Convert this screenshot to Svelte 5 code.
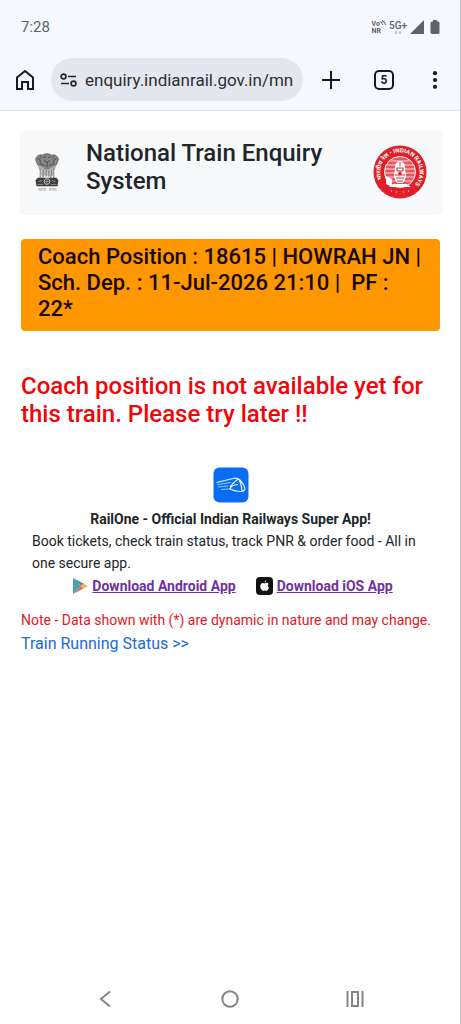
<script lang="ts">
	let address = 'enquiry.indianrail.gov.in/mn';

	const coach = {
		train: '18615',
		station: 'HOWRAH JN',
		departure: '11-Jul-2026 21:10',
		platform: '22*'
	};
</script>

<div class="screen">
	<div class="browser">
		<div class="status-bar">
			<span class="time">7:28</span>
			<div class="signals">
				<span class="volte">
					<span>Vo<svg width="6" height="6" viewBox="0 0 6 6" fill="none" stroke="#606266" aria-hidden="true"><path d="M.5 1.500 3 5M2 .5Q5 1 5.500 5M1 3q1-2 3-1" /></svg></span>
					<span>NR</span>
				</span>
				<span class="network">
					5G+
					<svg width="8" height="3" viewBox="0 0 8 3" fill="#c2c4c9" aria-hidden="true"><path d="M1 0h2v3H1zM5 0h2v3H5z" /></svg>
				</span>
				<svg width="14" height="14" viewBox="0 0 14 14" aria-hidden="true"><path d="M14 0v14H0z" fill="#606266" /></svg>
				<svg class="battery" width="10" height="14" viewBox="0 0 10 14" aria-hidden="true">
					<path d="M3 0h4v1.500h1.500Q9.500 1.500 9.500 3v9.500Q9.500 14 8 14H2Q.5 14 .5 12.500V3Q.5 1.500 2 1.500h1z" fill="#606266" />
				</svg>
			</div>
		</div>
		<div class="toolbar">
			<button class="tool" aria-label="Home">
				<svg width="20" height="22" viewBox="0 0 20 22" fill="none" stroke="#1a1b20" stroke-width="2">
					<path d="M2 8.500 10 2l8 6.500V20h-5v-7H7v7H2z" />
				</svg>
			</button>
			<label class="address">
				<svg width="17" height="14" viewBox="0 0 17 14" fill="none" stroke="#24262c" stroke-width="1.700" aria-hidden="true">
					<circle cx="3.500" cy="3.500" r="2.400" />
					<path d="M8 3.500h8M1 10.500h8" />
					<circle cx="13.500" cy="10.500" r="2.400" />
				</svg>
				<input type="text" aria-label="Address" bind:value={address} />
			</label>
			<button class="tool new-tab" aria-label="New tab">
				<svg width="18" height="18" viewBox="0 0 18 18" stroke="#1a1b20" stroke-width="2"><path d="M9 0v18M0 9h18" /></svg>
			</button>
			<button class="tool" aria-label="Switch tabs"><span class="tab-count">5</span></button>
			<button class="tool more" aria-label="More options">
				<svg width="6" height="18" viewBox="0 0 6 18" fill="#1a1b20">
					<circle cx="3" cy="2.200" r="2.100" /><circle cx="3" cy="9" r="2.100" /><circle cx="3" cy="15.800" r="2.100" />
				</svg>
			</button>
		</div>
	</div>

	<main>
		<header>
			<svg class="emblem" width="26" height="40" viewBox="0 0 26 42" role="img" aria-label="Emblem of India">
				<path d="M7 3Q13-1 19 3q5 0 6 5l-2 5-2 6H5l-2-6-2-5q1-5 6-5z" fill="#aaa" />
				<path d="M7 5q6-6 12 0l1 6-3 6-4 2-4-2-3-6zM1 8q1-5 6-5L5 8l2 6-4-1zM25 8q-1-5-6-5l2 5-2 6 4-1z" fill="#888" stroke="#555" stroke-width=".8" />
				<path d="M9 6q2-2 3 0m2 0q2-2 3 0M10 9l3 2 3-2M8 12l3 3m7-3-3 3m-2-4v5M3 7l2 1m18-1-2 1" fill="none" stroke="#444" stroke-width="1" />
				<path d="M6 17v11m3-12v11m8-11v11m3-10v11" stroke="#999" stroke-width="1.500" />
				<path d="M8 16q5 5 10 0l2 9H6z" fill="#bbb" />
				<path d="M9 18v7m3-6v7m3-7v7m3-8v7" stroke="#777" />
				<path d="M3 27h20l2 3-1 6H2l-1-6z" fill="#3c3c3c" />
				<circle cx="13" cy="31" r="3" fill="#333" stroke="#ccc" />
				<path d="M13 28v6m-3-3h6M4 31l4-1m10 0 4 1M3 34h6m8 0h6" stroke="#999" />
				<path d="M4 40h4m1 0h3m3 0h3m1 0h4M4 38.500h8m3 0h8" stroke="#999" stroke-width=".8" />
			</svg>
			<h1>National Train Enquiry System</h1>
			<svg class="railways" width="54" height="54" viewBox="0 0 54 54" role="img" aria-label="Indian Railways">
				<defs>
					<path id="ring" d="M14.500 41.900A19.500 19.500 0 1 1 39.500 41.900" />
				</defs>
				<circle cx="27" cy="27" r="26.500" fill="#df2029" />
				<text class="ring-text"><textPath href="#ring" startOffset="9">भारतीय रेल • INDIAN RAILWAYS</textPath></text>
				<circle cx="27" cy="27" r="15.500" fill="#e8545a" stroke="#fff" />
				<path d="M14 20h26M12 24h30M12 28h30M13 32h28M15 36h24M18 16h18" stroke="#fff" stroke-width=".8" />
				<path d="M22 22q0-5 5-6 5 1 5 6l1 10-3 6h-6l-3-6z" fill="#fff" />
				<path d="M24 23h6v3h-6zM22 30h10M23 33h8M24 36h6M27 17v4" fill="none" stroke="#df2029" />
				<circle cx="27" cy="28.500" r="1.800" fill="#df2029" />
				<path d="M20 39h14l4 3H16zM13 31l6 3v8l-6-3z" fill="#fff" />
				<path d="M18 46h1m4 1h1m6 0h1m4-1h1" stroke="#fff" />
			</svg>
		</header>

		<h2 class="coach">
			Coach Position : {coach.train} | {coach.station} | Sch. Dep. : {coach.departure} |&nbsp; PF : {coach.platform}
		</h2>

		<p class="message">Coach position is not available yet for this train. Please try later !!</p>

		<section class="promo">
			<svg class="app-icon" width="36" height="36" viewBox="0 0 36 36" role="img" aria-label="RailOne">
				<rect x=".5" y=".5" width="35" height="35" rx="6" fill="#086cf5" />
				<path d="M3.500 15.500 20 11.500q4-1 7 1.500 4 4 5 9-1 2.500-5 2.500-5 0-10-2.500 1-4 8-4.500M17 20q3-4 8-8M26 13q2.500 4 3 11" fill="none" stroke="#e6f4ff" stroke-width="1.200" />
				<path d="m4 17.500 14-2M5 20l10-1M8 22.500l9-.5" stroke="#bddcff" stroke-width=".8" />
			</svg>
			<strong>RailOne - Official Indian Railways Super App!</strong>
			<p>Book tickets, check train status, track PNR &amp; order food - All in one secure app.</p>
			<div class="downloads">
				<a href="#android">
					<svg width="16" height="16" viewBox="0 0 16 16" aria-hidden="true">
						<path d="M1 0v16l8-8z" fill="#4aa5a8" />
						<path d="m1 0 10.500 5.500L9 8z" fill="#4b8f8f" />
						<path d="m1 16 10.500-5.500L9 8z" fill="#d96d66" />
						<path d="M11.500 5.500 16 8l-4.500 2.500L9 8z" fill="#efb45b" />
					</svg>
					<span>Download Android App</span>
				</a>
				<a href="#ios">
					<svg width="17" height="18" viewBox="0 0 17 18" aria-hidden="true">
						<rect width="17" height="18" rx="4" fill="#111" />
						<path d="M8.500 6.500Q11 5 12.700 7 10.800 8.500 13 10.700 11.500 15 8.800 13.500 6 15 4.500 11 3.500 7.500 6 6.200 7.300 5.800 8.500 6.500M8.500 5.600Q8.500 3.800 10.200 3.200 10.300 5 8.500 5.600" fill="#fff" />
					</svg>
					<span>Download iOS App</span>
				</a>
			</div>
		</section>

		<p class="note">Note - Data shown with (*) are dynamic in nature and may change.</p>
		<a class="running" href="#status">Train Running Status &gt;&gt;</a>
	</main>

	<nav aria-label="System navigation">
		<button aria-label="Back">
			<svg width="12" height="18" viewBox="0 0 12 18" fill="none" stroke="#858585" stroke-width="2"><path d="M11 1.500 2 9l9 7.500" /></svg>
		</button>
		<button aria-label="Home screen">
			<svg width="18" height="18" viewBox="0 0 18 18" fill="none" stroke="#858585" stroke-width="2"><circle cx="9" cy="9" r="7.700" /></svg>
		</button>
		<button aria-label="Recent apps">
			<svg width="18" height="16" viewBox="0 0 18 16" fill="none" stroke="#858585" stroke-width="2"><path d="M1.500 0v16M16.500 0v16M6 1h6v14H6z" /></svg>
		</button>
	</nav>
</div>

<style>
	:global(body) {
		background: #fff;
	}

	.screen {
		box-sizing: border-box;
		display: flex;
		flex-direction: column;
		min-height: 100vh;
		border-right: 1px solid #c5c6ca;
		color: #212529;
		font-family: Roboto, sans-serif;
		font-size: 14px;
		line-height: 22px;
	}

	h1,
	h2,
	p {
		margin: 0;
	}

	button {
		display: flex;
		align-items: center;
		justify-content: center;
		padding: 0;
		border: 0;
		background: none;
		color: inherit;
	}

	svg {
		flex-shrink: 0;
	}

	.browser {
		padding-top: 14px;
		border-bottom: 1px solid #dce1ea;
		background: #f5f8fe;
	}

	.status-bar {
		display: flex;
		align-items: center;
		justify-content: space-between;
		height: 26px;
		padding: 0 20px 0 21px;
		color: #606266;
	}

	.time {
		font-size: 15px;
	}

	.signals {
		display: flex;
		align-items: center;
		gap: 3px;
	}

	.volte {
		display: flex;
		flex-direction: column;
		font-size: 7px;
		font-weight: 700;
		line-height: 7px;
	}

	.network {
		display: flex;
		flex-direction: column;
		align-items: center;
		font-size: 10px;
		font-weight: 500;
		line-height: 11px;
	}

	.battery {
		margin-left: 3px;
	}

	.toolbar {
		display: flex;
		align-items: center;
		padding: 18px 9px 9px;
	}

	.tool {
		width: 32px;
		height: 32px;
	}

	.address {
		display: flex;
		flex: 1;
		align-items: center;
		gap: 8px;
		box-sizing: border-box;
		min-width: 0;
		height: 43px;
		margin-left: 10px;
		padding: 0 7px 0 9px;
		border-radius: 22px;
		background: #e4e7ed;
	}

	.address input {
		flex: 1;
		min-width: 0;
		padding: 0;
		border: 0;
		outline: 0;
		background: none;
		color: #2c2e34;
		font: 17px Roboto, sans-serif;
	}

	.new-tab {
		margin: 0 21px 0 12px;
	}

	.more {
		margin-left: 19px;
	}

	.tab-count {
		box-sizing: border-box;
		width: 20px;
		height: 20px;
		border: 2px solid #1a1b20;
		border-radius: 5px;
		font: 700 12px/16px Roboto, sans-serif;
	}

	main {
		flex: 1;
		padding: 20px 20px 20px 21px;
	}

	header {
		display: flex;
		align-items: center;
		box-sizing: border-box;
		min-height: 83px;
		margin-right: -2px;
		padding: 7px 14px 9px 12px;
		border: 1px solid #f6f6f6;
		border-radius: 3px;
		background: #f7f9fb;
		box-shadow: 0 0 2px #eee;
	}

	h1 {
		flex: 1;
		align-self: flex-start;
		margin-left: 26px;
		font-size: 24px;
		font-weight: 500;
		line-height: 28px;
	}

	.ring-text {
		fill: #fff;
		font: 700 6px Roboto, "Noto Sans", sans-serif;
	}

	.coach {
		margin-top: 25px;
		padding: 5px 17px 9px;
		border-radius: 4px;
		background: #ff9800;
		color: #180800;
		font-size: 22px;
		font-weight: 500;
		line-height: 26px;
	}

	.message {
		margin-top: 41px;
		color: #f20408;
		font-size: 24px;
		font-weight: 500;
		line-height: 28px;
	}

	.promo {
		display: flex;
		flex-direction: column;
		align-items: center;
		margin-top: 39px;
		padding: 0 11px;
	}

	.app-icon {
		margin-bottom: 5px;
	}

	.downloads {
		display: flex;
		justify-content: center;
		gap: 20px;
		margin: 1px 0 0 4px;
	}

	.downloads a {
		display: flex;
		align-items: center;
		gap: 4px;
		color: #7030a0;
		font-weight: 700;
		text-decoration: none;
	}

	.downloads span {
		text-decoration: underline;
	}

	.note {
		margin-top: 12px;
		color: #e01923;
	}

	.running {
		display: inline-block;
		color: #186ae0;
		font-size: 16px;
		line-height: 26px;
		text-decoration: none;
	}

	nav {
		display: flex;
		align-items: center;
		justify-content: space-around;
		height: 51px;
		padding: 0 42px;
	}

	nav button {
		width: 32px;
		height: 32px;
	}
</style>
